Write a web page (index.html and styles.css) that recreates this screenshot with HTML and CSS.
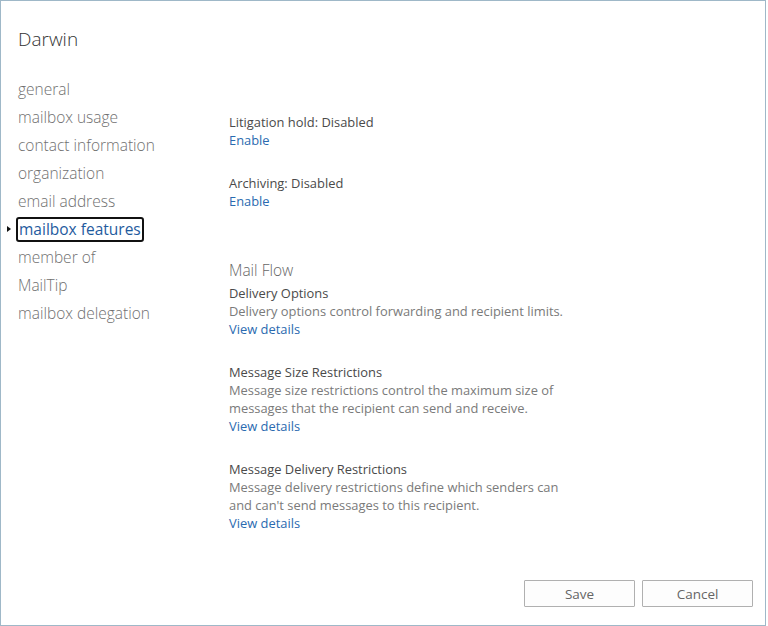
FILE: index.html
```html
<!DOCTYPE html>
<html>
<head>
<meta charset="utf-8">
<link rel="stylesheet" href="styles.css">
</head>
<body>
<div class="dialog">
  <h1 class="title">Darwin</h1>
  <div class="body">
    <nav class="nav">
      <div class="nav-item">general</div>
      <div class="nav-item">mailbox usage</div>
      <div class="nav-item">contact information</div>
      <div class="nav-item">organization</div>
      <div class="nav-item">email address</div>
      <div class="nav-item selected">mailbox features</div>
      <div class="nav-item">member of</div>
      <div class="nav-item">MailTip</div>
      <div class="nav-item">mailbox delegation</div>
    </nav>
    <main class="main">
      <div class="block">
        <div class="label">Litigation hold: Disabled</div>
        <a class="link">Enable</a>
      </div>
      <div class="block">
        <div class="label">Archiving: Disabled</div>
        <a class="link">Enable</a>
      </div>
      <h2 class="section">Mail Flow</h2>
      <div class="block">
        <div class="label">Delivery Options</div>
        <div class="desc">Delivery options control forwarding and recipient limits.</div>
        <a class="link">View details</a>
      </div>
      <div class="block">
        <div class="label">Message Size Restrictions</div>
        <div class="desc">Message size restrictions control the maximum size of messages that the recipient can send and receive.</div>
        <a class="link">View details</a>
      </div>
      <div class="block">
        <div class="label">Message Delivery Restrictions</div>
        <div class="desc">Message delivery restrictions define which senders can and can't send messages to this recipient.</div>
        <a class="link">View details</a>
      </div>
    </main>
  </div>
  <div class="footer">
    <button class="btn">Save</button>
    <button class="btn">Cancel</button>
  </div>
</div>
</body>
</html>
```
FILE: styles.css
```css
html, body {
  margin: 0;
  padding: 0;
  background: #ffffff;
}
.dialog {
  box-sizing: border-box;
  width: 766px;
  height: 626px;
  border: 1px solid #9fb8c8;
  display: flex;
  flex-direction: column;
  padding-left: 17px;
  font-family: "Open Sans", "Noto Sans", sans-serif;
}
.title {
  margin: 26px 0 0 0;
  font-size: 19px;
  line-height: 24px;
  font-weight: 300;
  color: #333333;
}
.body {
  display: flex;
  margin-top: 24px;
}
.nav {
  width: 211px;
  flex: none;
}
.nav-item {
  font-size: 15.5px;
  font-weight: 300;
  line-height: 28px;
  color: #707070;
  white-space: nowrap;
}
.nav-item.selected {
  position: relative;
  display: inline-block;
  color: #1f5b9e;
  font-weight: 400;
  font-size: 15.5px;
  line-height: 21px;
  border: 2px solid #111111;
  border-radius: 3px;
  padding: 0 1px;
  margin: 1.5px 0 1.5px -2px;
}
.nav-item.selected::before {
  content: "";
  position: absolute;
  left: -11px;
  top: 7px;
  border-left: 4px solid #111111;
  border-top: 3.5px solid transparent;
  border-bottom: 3.5px solid transparent;
}
.main {
  padding-top: 38px;
  font-size: 12.9px;
  line-height: 18px;
}
.block {
  margin-bottom: 25px;
}
.label {
  color: #4a4a4a;
}
.desc {
  color: #7a7a7a;
  max-width: 340px;
}
.link {
  display: block;
  color: #2a6ab0;
  cursor: pointer;
}
.section {
  margin: 49px 0 3px 0;
  font-size: 15.5px;
  line-height: 22px;
  font-weight: 300;
  color: #666666;
}
.footer {
  margin-top: auto;
  display: flex;
  justify-content: flex-end;
  gap: 7px;
  padding: 0 12px 18px 0;
}
.btn {
  width: 111px;
  height: 27px;
  box-sizing: border-box;
  border: 1px solid #b0b0b0;
  border-radius: 1px;
  background: #fdfdfd;
  color: #666666;
  font-family: "Open Sans", "Noto Sans", sans-serif;
  font-size: 13.5px;
  padding: 0;
}
```
